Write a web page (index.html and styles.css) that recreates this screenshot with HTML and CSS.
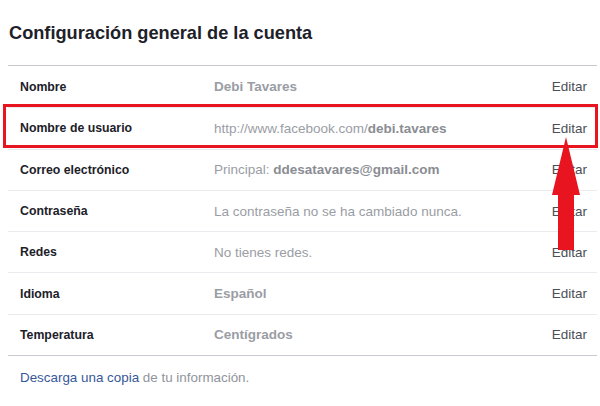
FILE: index.html
```html
<!DOCTYPE html>
<html lang="es">
<head>
<meta charset="utf-8">
<link rel="stylesheet" href="styles.css">
</head>
<body>
<div class="page">
  <h2 class="title">Configuración general de la cuenta</h2>
  <ul class="settings">
    <li class="row"><span class="label">Nombre</span><span class="value strong">Debi Tavares</span><span class="edit">Editar</span></li>
    <li class="row"><span class="label">Nombre de usuario</span><span class="value">http://www.facebook.com/<b>debi.tavares</b></span><span class="edit">Editar</span></li>
    <li class="row"><span class="label">Correo electrónico</span><span class="value">Principal: <b>ddesatavares@gmail.com</b></span><span class="edit">Editar</span></li>
    <li class="row"><span class="label">Contraseña</span><span class="value">La contraseña no se ha cambiado nunca.</span><span class="edit">Editar</span></li>
    <li class="row"><span class="label">Redes</span><span class="value">No tienes redes.</span><span class="edit">Editar</span></li>
    <li class="row"><span class="label">Idioma</span><span class="value strong">Español</span><span class="edit">Editar</span></li>
    <li class="row"><span class="label">Temperatura</span><span class="value strong">Centígrados</span><span class="edit">Editar</span></li>
  </ul>
  <p class="footer"><a class="link">Descarga una copia</a> de tu información.</p>

  <div class="highlight"></div>
  <svg class="arrow" width="30" height="114" viewBox="0 0 30 114">
    <polygon points="15,0 29,58 23,58 23,113 7,113 7,58 1,58" fill="#e8141f"/>
  </svg>
</div>
</body>
</html>
```
FILE: styles.css
```css
html, body {
  margin: 0;
  padding: 0;
  background: #ffffff;
}
.page {
  position: relative;
  width: 600px;
  height: 406px;
  overflow: hidden;
  font-family: "Liberation Sans", Arial, sans-serif;
}
.title {
  margin: 0;
  padding: 23px 0 0 9px;
  height: 42px;
  box-sizing: border-box;
  font-size: 18.2px;
  font-weight: bold;
  color: #1d2129;
  line-height: 20px;
}
.settings {
  list-style: none;
  margin: 23px 3px 0 8px;
  padding: 0;
  border-top: 1px solid #c8cacf;
  border-bottom: 1px solid #c8cacf;
}
.row {
  display: flex;
  align-items: center;
  height: 41.3px;
  box-sizing: border-box;
  padding: 0 10px 0 12px;
  border-top: 1px solid #e9ebee;
}
.row:first-child {
  border-top: none;
}
.label {
  width: 194px;
  flex: none;
  font-weight: bold;
  color: #1d2129;
  font-size: 12.3px;
}
.value {
  flex: 1;
  color: #9a9da4;
  font-size: 13.5px;
}
.value.strong, .value b {
  font-weight: bold;
}
.value b {
  color: #8a8d93;
}
.edit {
  color: #4b4f56;
  font-size: 13.5px;
}
.footer {
  margin: 14px 0 0 20px;
  font-size: 13.4px;
  color: #90949c;
}
.link {
  color: #365899;
}
.highlight {
  position: absolute;
  left: 3px;
  top: 104px;
  width: 595px;
  height: 44px;
  box-sizing: border-box;
  border: 3px solid #e8141f;
}
.arrow {
  position: absolute;
  left: 551px;
  top: 137px;
}
```
